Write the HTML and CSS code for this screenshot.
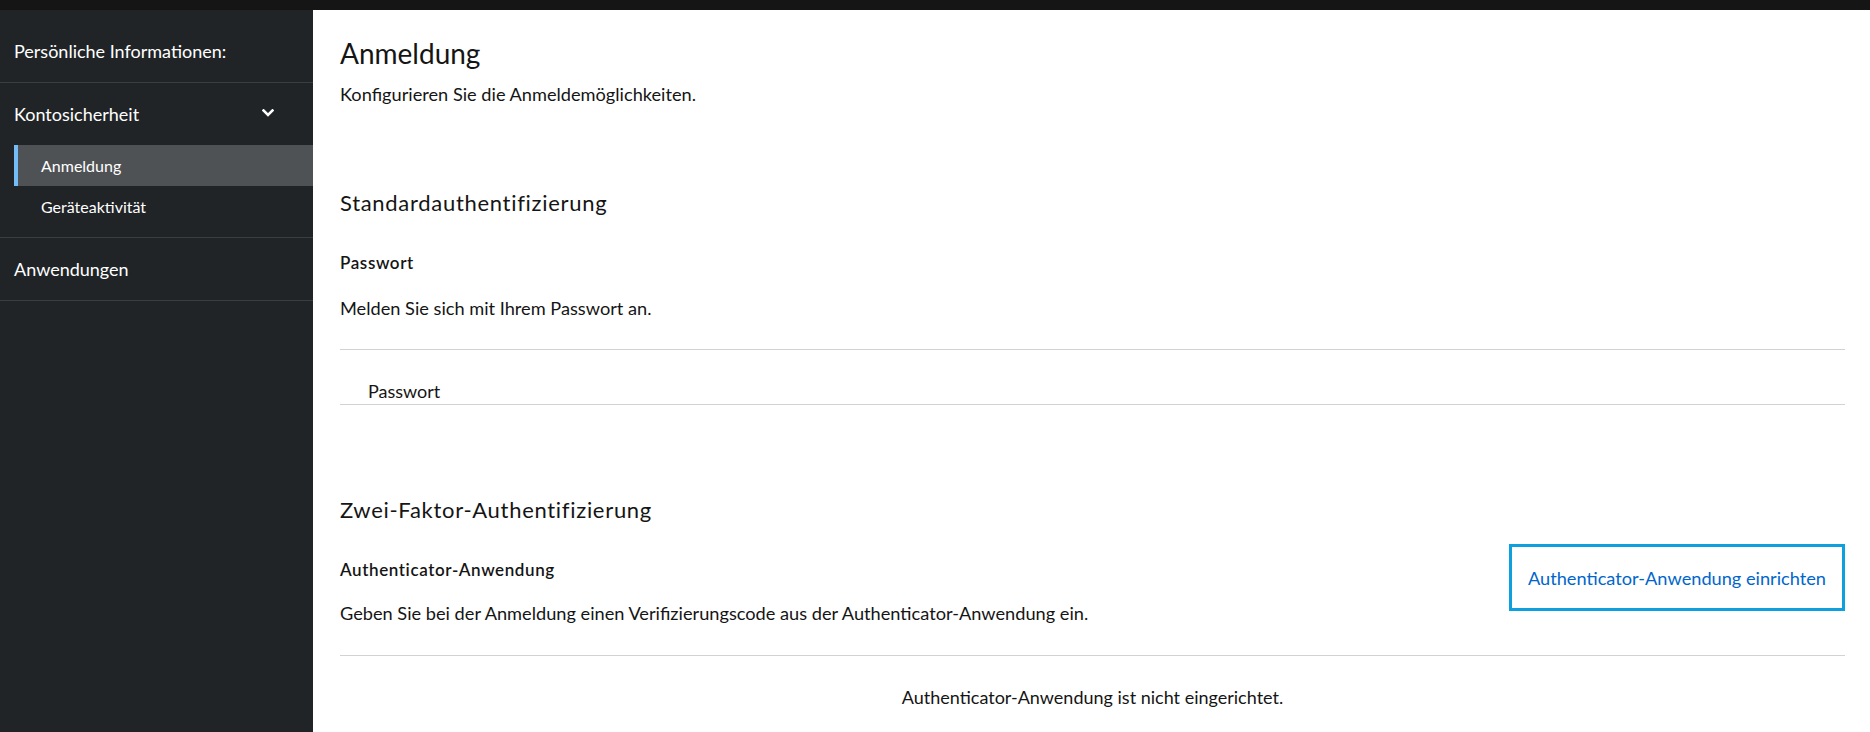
FILE: index.html
```html
<!DOCTYPE html>
<html lang="de">
<head>
<meta charset="utf-8">
<title>Anmeldung</title>
<link rel="stylesheet" href="styles.css">
</head>
<body>
<div class="topbar"></div>
<div class="layout">
  <nav class="sidebar">
    <div class="nav-group">
      <a class="nav-link">Persönliche Informationen:</a>
    </div>
    <div class="nav-group">
      <div class="nav-link nav-toggle">
        <span>Kontosicherheit</span>
        <svg class="chevron" width="12" height="9" viewBox="0 0 12 9"><polyline points="1.5,1.5 6,6 10.5,1.5" fill="none" stroke="#fff" stroke-width="2.6" stroke-linecap="square"/></svg>
      </div>
      <ul class="subnav">
        <li class="sub-item active">Anmeldung</li>
        <li class="sub-item">Geräteaktivität</li>
      </ul>
    </div>
    <div class="nav-group">
      <a class="nav-link">Anwendungen</a>
    </div>
  </nav>
  <main class="content">
    <header class="page-head">
      <h1 class="page-title">Anmeldung</h1>
      <p class="page-desc">Konfigurieren Sie die Anmeldemöglichkeiten.</p>
    </header>

    <section class="cred-section first">
      <h2 class="section-title">Standardauthentifizierung</h2>
      <div class="cred-type">
        <div class="cred-info">
          <h3 class="cred-name">Passwort</h3>
          <p class="cred-help">Melden Sie sich mit Ihrem Passwort an.</p>
        </div>
      </div>
      <ul class="cred-list">
        <li class="cred-row">Passwort</li>
      </ul>
    </section>

    <section class="cred-section second">
      <h2 class="section-title">Zwei-Faktor-Authentifizierung</h2>
      <div class="cred-type with-action">
        <div class="cred-info">
          <h3 class="cred-name">Authenticator-Anwendung</h3>
          <p class="cred-help">Geben Sie bei der Anmeldung einen Verifizierungscode aus der Authenticator-Anwendung ein.</p>
        </div>
        <button class="setup-btn">Authenticator-Anwendung einrichten</button>
      </div>
      <ul class="cred-list">
        <li class="cred-row empty">Authenticator-Anwendung ist nicht eingerichtet.</li>
      </ul>
    </section>
  </main>
</div>
</body>
</html>
```

FILE: styles.css
```css
* { box-sizing: border-box; }
html, body { margin: 0; padding: 0; height: 100%; }
body {
  font-family: Lato, "Noto Sans", sans-serif;
  color: #151515;
  background: #fff;
  overflow: hidden;
}
.topbar { height: 10px; background: #151515; }
.layout { display: flex; height: 722px; }

.sidebar {
  width: 313px;
  flex: none;
  background: #212427;
  color: #fff;
  padding-top: 10px;
}
.nav-group { border-bottom: 1px solid #3b3e41; }
.nav-link {
  display: block;
  padding: 19px 14px;
  font-size: 18px;
  line-height: 24px;
  color: #fff;
}
.nav-toggle {
  display: flex;
  justify-content: space-between;
  align-items: center;
  padding-right: 39px;
}
.chevron { display: block; margin-top: -2px; }
.subnav { list-style: none; margin: 0; padding: 0 0 10px 14px; }
.sub-item {
  height: 41px;
  display: flex;
  align-items: center;
  padding-left: 27px;
  font-size: 16px;
  line-height: 22px;
  color: #fff;
}
.sub-item.active {
  background: #4f5255;
  border-left: 4px solid #73bcf7;
  padding-left: 23px;
}

.content {
  flex: 1;
  padding: 27px 25px 0 27px;
}
.page-title {
  margin: 0;
  font-size: 28px;
  line-height: 32px;
  font-weight: 400;
}
.page-desc {
  margin: 12px 0 0;
  font-size: 18.2px;
  line-height: 26px;
}
.section-title {
  margin: 0;
  font-size: 22px;
  line-height: 28px;
  font-weight: 400;
  letter-spacing: 0.7px;
}
.cred-section.first { margin-top: 82px; }
.cred-section.second { margin-top: 91px; }
.cred-type { display: flex; justify-content: space-between; align-items: flex-start; }
.first .cred-type { padding-top: 35px; }
.second .cred-type { padding-top: 20px; }
.second .cred-info { padding-top: 15px; }
.cred-name {
  margin: 0;
  font-size: 17px;
  line-height: 22px;
  font-weight: 600;
  letter-spacing: 0.6px;
}
.cred-help {
  margin: 21px 0 0;
  font-size: 18.2px;
  line-height: 26px;
}
.second .cred-help { margin-top: 19px; }
.cred-list {
  list-style: none;
  margin: 28px 0 0;
  padding: 0;
  border-top: 1px solid #d2d2d2;
}
.second .cred-list { margin-top: 29px; }
.cred-row {
  padding: 28px 0 0 28px;
  font-size: 18px;
  line-height: 26px;
  border-bottom: 1px solid #d2d2d2;
}
.cred-row.empty { padding-left: 0; text-align: center; border-bottom: none; }

.setup-btn {
  height: 67px;
  padding: 0 16px;
  background: #fff;
  border: 3px solid #0ea0de;
  color: #0066cc;
  font-family: inherit;
  font-size: 18.2px;
  line-height: 26px;
  cursor: pointer;
}
```
